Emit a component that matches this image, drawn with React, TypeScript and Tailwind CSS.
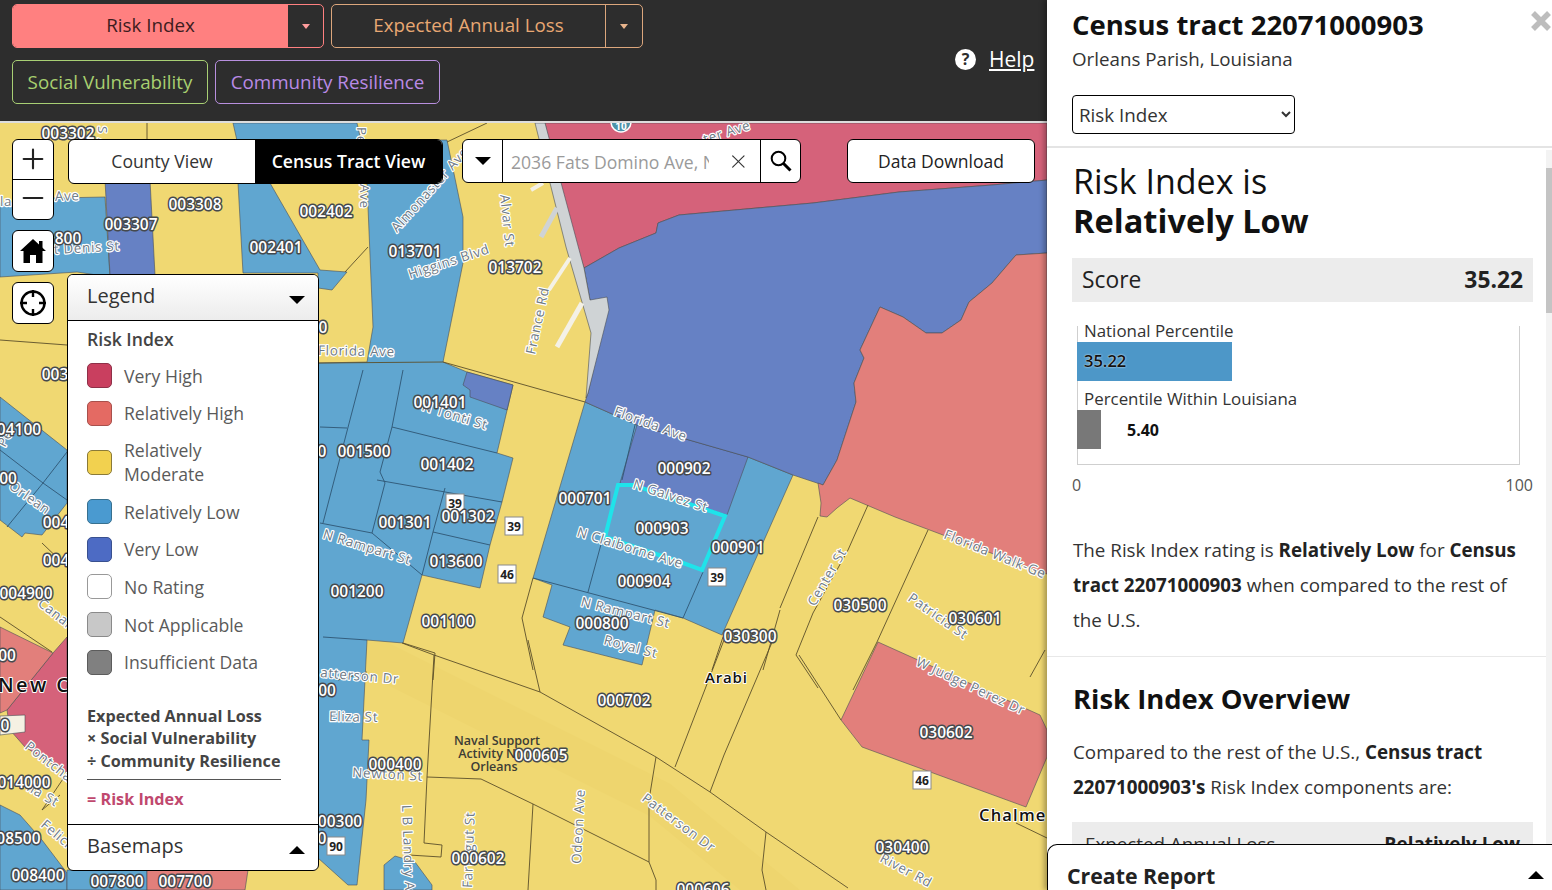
import React from 'react';
import { Plus, Minus, X } from 'lucide-react';

const YELLOW = '#f0d872';
const BLUE = '#60a6d0';
const DARK = '#6681c4';
const RED = '#d5627a';
const SALMON = '#e27f7b';

const polys: [string, string][] = [
  ['0,203 55,198 105,197 110,277 77,272 0,277', BLUE],
  ['105,180 150,180 155,275 110,275', DARK],
  ['233,123 357,123 362,145 238,145', BLUE],
  ['238,183 270,183 320,270 347,272 332,290 318,288 318,273 243,273', BLUE],
  ['365,140 447,140 463,217 463,263 443,362 467,372 513,385 497,453 513,458 502,502 490,545 480,588 422,575 403,643 367,640 362,740 369,740 366,800 357,885 348,885 318,858 318,363 367,362 373,327 367,183', BLUE],
  ['463,385 467,372 513,385 507,410 470,397 470,390', DARK],
  ['585,402 637,425 748,457 793,475 722,635 683,618 655,610 642,665 563,645 570,627 543,617 552,585 533,578', BLUE],
  ['637,425 748,457 727,515 620,483', DARK],
  ['0,397 67,450 67,503 42,535 25,533 22,537 0,520', BLUE],
  ['0,805 20,815 42,840 67,873 67,890 0,890', BLUE],
  ['67,870 147,870 147,890 67,890', BLUE],
  ['147,870 248,870 245,890 147,890', SALMON],
  ['384,890 384,865 395,856 415,862 432,885 432,890', BLUE],
  ['67,637 53,653 7,710 10,730 25,747 67,773', RED],
  ['0,627 53,653 7,710 0,713', SALMON],
  ['0,716 25,715 25,732 0,735', '#f5f1e3'],
  ['545,123 1047,123 1047,180 992,185 899,192 813,203 679,215 658,223 656,233 619,248 584,268 557,183', RED],
  ['584,268 619,248 656,233 658,223 679,215 813,203 899,192 992,185 1047,180 1047,253 1016,255 992,283 969,302 961,320 942,333 926,333 903,317 880,307 860,350 864,358 854,383 856,402 837,460 823,485 793,475 748,457 637,425 585,402 588,393 607,310 590,300', DARK],
  ['880,307 903,317 926,333 942,333 961,320 969,302 992,283 1016,255 1047,253 1047,574 943,535 895,517 850,498 837,508 827,517 820,516 821,503 818,483 823,485 837,460 856,402 854,383 864,358 860,350', SALMON],
  ['878,642 1040,715 1047,730 1047,757 1026,807 862,747 841,720', SALMON],
  ['535,123 545,123 584,268 590,300 607,297 609,310 588,393 586,398 591,333 566,247', '#cfd3d5'],
];

const tractLines = [
  '402,643 434,655 540,692 656,757 710,792 766,832 848,888',
  '434,655 427,777 424,843 442,845 441,857 409,855',
  '427,777 481,779 533,804 649,862 656,880 656,890',
  '533,804 528,890',
  '656,757 649,800 649,862',
  '528,640 540,692',
  '724,640 675,767',
  '773,640 724,755 710,792',
  '799,655 841,720',
  '766,832 762,870 766,890',
  '1016,823 1047,838',
  '818,517 780,608',
  '868,505 848,550 813,613 796,655 818,688',
  '928,530 877,642 853,690',
  '1045,650 1030,677',
  '522,618 533,578',
  '522,618 533,670',
  '403,643 435,653 433,680',
  '780,610 763,670',
  '723,637 712,670',
  '147,123 147,139',
  '447,142 487,123',
  '368,247 345,272',
  '0,340 67,345',
  '42,543 67,567',
  '0,617 52,652',
  '338,680 367,672',
  '67,773 42,810 60,795',
  '443,362 585,402',
  '318,363 443,362',
];

const blueLines = [
  '635,425 622,480',
  '603,537 588,592',
  '533,578 683,618',
  '703,572 683,618',
  '363,370 323,523',
  '403,370 392,427 380,472 385,483 372,533',
  '392,427 497,453',
  '377,480 502,502',
  '445,488 433,532 422,575',
  '433,532 490,545',
  '320,523 372,533 422,575',
  '320,427 347,428',
  '323,637 367,640',
  '0,450 43,483 67,500',
  '67,452 43,483 7,527',
];

type Lbl = [string, number, number];
const tractLabels: Lbl[] = [
  ['003302', 68, 133], ['003308', 195, 204], ['003307', 131, 224], ['002402', 326, 211], ['002401', 276, 247],
  ['013701', 415, 251], ['013702', 515, 267], ['800', 68, 238], ['001401', 440, 402], ['001500', 364, 451],
  ['001402', 447, 464], ['001301', 405, 522], ['001302', 468, 516], ['013600', 456, 561], ['001200', 357, 591],
  ['001100', 448, 621], ['000701', 585, 498], ['000902', 684, 468], ['000903', 662, 528], ['000901', 738, 547],
  ['000904', 644, 581], ['000800', 602, 623], ['030300', 750, 636], ['000702', 624, 700], ['030500', 860, 605],
  ['030601', 975, 618], ['030602', 946, 732], ['030400', 902, 847], ['000605', 541, 755], ['000400', 395, 764],
  ['000602', 478, 858], ['000606', 703, 889], ['00300', 340, 821], ['00', 327, 690], ['0', 322, 451], ['0', 323, 327],
  ['04100', 19, 429], ['00', 8, 478], ['004', 56, 522], ['004', 56, 560], ['004900', 26, 593], ['00', 7, 655],
  ['014000', 24, 782], ['008500', 14, 838], ['008400', 38, 875], ['007800', 117, 881], ['007700', 185, 881], ['003', 55, 374],
  ['0', 322, 838], ['0', 5, 725],
];

type Street = [string, number, number, number];
const streets: Street[] = [
  ['Ave', 55, 201, -2], ['la', 0, 206, 0], ['t Denis St', 54, 254, -3], ['Almonaster Ave', 397, 233, -48],
  ['Higgins Blvd', 410, 279, -18], ['Alvar St', 500, 195, 84], ['France Rd', 535, 355, -78], ['Florida Ave', 318, 355, 1],
  ['N Tonti St', 421, 410, 17], ['Florida Ave', 613, 415, 20], ['N Claiborne Ave', 576, 536, 17],
  ['N Galvez St', 632, 488, 18], ['N Rampart St', 322, 538, 17], ['N Rampart St', 580, 606, 14], ['Royal St', 603, 644, 15],
  ['Center St', 815, 607, -60], ['Patricia St', 907, 600, 35], ['Florida Walk-Ge', 943, 538, 22], ['W Judge Perez Dr', 915, 665, 25],
  ['ter Ave', 705, 144, -18], ['atterson Dr', 320, 677, 5], ['Eliza St', 329, 721, 1], ['Newton St', 352, 777, 3],
  ['L B Landry Ave', 402, 805, 88], ['Farragut St', 472, 888, -88], ['Odeon Ave', 581, 864, -87],
  ['Patterson Dr', 641, 800, 37], ['River Rd', 879, 861, 28], ['S A', 98, 126, 90], ['Pe', 357, 127, 90], ['Ave', 360, 184, 90],
  ['Orlean', 8, 488, 35], ['Canal', 37, 605, 38], ['Pontcha', 24, 748, 38], ['Felicia', 40, 826, 40], ['lla St', 26, 790, 30], ['Pe', 5, 448, -62],
];

const shields: [string, number, number][] = [
  ['39', 455, 503], ['39', 514, 526], ['46', 507, 574], ['39', 717, 577], ['46', 922, 780], ['90', 336, 846],
];

const MapLayer = () => (
  <svg viewBox="0 123 1047 767" className="block w-[1047px] h-[767px] font-['Open_Sans',sans-serif]">
    <rect x="0" y="123" width="1047" height="767" fill={YELLOW} />
    <polyline points="340,640 660,800 880,980" fill="none" stroke="#eed56e" strokeWidth="38" />
    <polygon points="640,285 830,245 960,240 900,290 850,330 790,420 700,400 620,380" fill="#6d88c9" opacity="0.6" />
    {polys.map(([points, fill], i) => (
      <polygon key={i} points={points} fill={fill} stroke="#4a4f55" strokeWidth="0.6" />
    ))}
    <polyline points="557,347 582,303" stroke="#f4f1e6" strokeWidth="5" fill="none" />
    <polyline points="549,290 570,258" stroke="#f4f1e6" strokeWidth="4" fill="none" />
    <polyline points="541,237 557,208" stroke="#cfd3d5" strokeWidth="5" fill="none" />
    <polyline points="531,190 543,183" stroke="#f4f1e6" strokeWidth="4" fill="none" />
    {tractLines.map((points, i) => (
      <polyline key={i} points={points} fill="none" stroke="#5b4f2a" strokeWidth="0.9" />
    ))}
    {blueLines.map((points, i) => (
      <polyline key={i} points={points} fill="none" stroke="#2f5674" strokeWidth="0.9" />
    ))}
    <polygon points="618,485 633,485 725,516 702,570 683,563 605,537" fill="none" stroke="#1fe3ea" strokeWidth="4" />
    <circle cx="621" cy="122" r="10" fill="#4d93a8" stroke="#fff" strokeWidth="1.5" />
    <text x="621" y="130" textAnchor="middle" fontSize="10" fontWeight="700" fill="#fff">10</text>
    {streets.map(([t, x, y, r], i) => (
      <text key={i} x={x} y={y} transform={`rotate(${r} ${x} ${y})`} fontSize="13.4" fontWeight="500" letterSpacing="0.7" fill="#6e7a86" stroke="#fff" strokeWidth="2.4" strokeLinejoin="round" className="[paint-order:stroke]">
        {t}
      </text>
    ))}
    {shields.map(([t, x, y], i) => (
      <g key={i}>
        <rect x={x - 9} y={y - 9} width="18" height="18" fill="#fff" stroke="#8a8a8a" strokeWidth="1" />
        <text x={x} y={y + 4.5} textAnchor="middle" fontSize="12" fontWeight="700" fill="#222">{t}</text>
      </g>
    ))}
    {tractLabels.map(([t, x, y], i) => (
      <text key={i} x={x} y={y + 5.5} textAnchor="middle" fontSize="15.5" fontWeight="600" fill="#fff" stroke="#45494d" strokeWidth="3" strokeLinejoin="round" className="[paint-order:stroke]">
        {t}
      </text>
    ))}
    <g fontSize="12.5" fontWeight="600" fill="#3d3d35" textAnchor="middle">
      <text x="497" y="745">Naval Support</text>
      <text x="487" y="758">Activity N</text>
      <text x="494" y="771">Orleans</text>
    </g>
    <g fontWeight="600" fill="#111" stroke="#fff" strokeWidth="2" strokeLinejoin="round" className="[paint-order:stroke]">
      <text x="705" y="683" fontSize="15" letterSpacing="0.8">Arabi</text>
      <text x="979" y="821" fontSize="16.5" letterSpacing="1.2">Chalme</text>
      <text x="-2" y="692" fontSize="20" letterSpacing="2.4">New C</text>
    </g>
  </svg>
);

const legendRows: [string, string, string][] = [
  ['Very High', 'bg-[#c93f5f]', 'border-[#8e3048]'],
  ['Relatively High', 'bg-[#e46a63]', 'border-[#a8504c]'],
  ['Relatively Moderate', 'bg-[#f2d14f]', 'border-[#8a7a38]'],
  ['Relatively Low', 'bg-[#4a9ad0]', 'border-[#37708f]'],
  ['Very Low', 'bg-[#4d6bc4]', 'border-[#39508f]'],
  ['No Rating', 'bg-white', 'border-[#999999]'],
  ['Not Applicable', 'bg-[#c8c8c8]', 'border-[#8a8a8a]'],
  ['Insufficient Data', 'bg-[#808080]', 'border-[#5c5c5c]'],
];

const Down = ({ className }: { className: string }) => (
  <div className={`w-0 h-0 border-x-[8px] border-x-transparent border-t-[8px] border-t-black ${className}`} />
);
const Up = ({ className }: { className: string }) => (
  <div className={`w-0 h-0 border-x-[8px] border-x-transparent border-b-[8px] border-b-black ${className}`} />
);

const Legend = () => (
  <div className="absolute left-[67px] top-[151px] w-[252px] h-[597px] bg-white border border-black rounded-[6px] overflow-hidden flex flex-col">
    <div className="h-[46px] shrink-0 flex items-center justify-between pl-[19px] pr-[13px] border-b border-black bg-gradient-to-b from-white to-[#ececec]">
      <span className="text-[20px] leading-[24px] text-[#333] -mt-[4px]">Legend</span>
      <Down className="mt-1" />
    </div>
    <div className="flex-1 pl-[19px] pr-[37px] pt-[6px]">
      <div className="text-[17.6px] leading-[24px] font-semibold text-[#444] mb-[12px]">Risk Index</div>
      <div className="flex flex-col gap-[12.7px]">
        {legendRows.map(([label, bg, border]) => (
          <div key={label} className="flex items-center gap-[12px]">
            <div className={`w-[25px] h-[25px] rounded-[5px] border shrink-0 ${bg} ${border}`} />
            <span className="text-[17.6px] leading-[24px] text-[#5a5a5a] w-[150px]">{label}</span>
          </div>
        ))}
      </div>
      <div className="mt-[30px] text-[16.2px] leading-[22.5px] font-bold text-[#444]">
        <div>Expected Annual Loss</div>
        <div>× Social Vulnerability</div>
        <div>÷ Community Resilience</div>
      </div>
      <div className="mt-[7px] border-t border-[#555] w-[194px]" />
      <div className="mt-[8px] text-[16.2px] leading-[22px] font-bold text-[#c0486e]">= Risk Index</div>
    </div>
    <div className="h-[46px] shrink-0 flex items-center justify-between pl-[19px] pr-[13px] border-t border-black">
      <span className="text-[20px] leading-[24px] text-[#333] -mt-[4px]">Basemaps</span>
      <Up className="mt-1" />
    </div>
  </div>
);

const MapControls = () => (
  <>
    <div className="absolute left-[12px] top-[16px] flex flex-col w-[42px]">
      <div className="bg-white border border-black rounded-[6px] flex flex-col h-[81px]">
        <div className="h-[40px] flex items-center justify-center border-b border-black pb-[2px]"><Plus size={32} strokeWidth={1.6} className="text-[#222]" /></div>
        <div className="flex-1 flex items-center justify-center pb-[3px]"><Minus size={32} strokeWidth={1.6} className="text-[#222]" /></div>
      </div>
      <div className="mt-[10px] h-[42px] bg-white border border-black rounded-[6px] flex items-center justify-center">
        <svg viewBox="0 0 26 26" className="w-[26px] h-[26px]" fill="black">
          <path d="M13 1 L26 13 L22.5 13 L22.5 25 L16 25 L16 17 L10 17 L10 25 L3.5 25 L3.5 13 L0 13 Z" />
          <rect x="19" y="3" width="3.5" height="7" />
        </svg>
      </div>
      <div className="mt-[10px] h-[42px] bg-white border border-black rounded-[6px] flex items-center justify-center">
        <svg viewBox="0 0 28 28" className="w-[28px] h-[28px]" fill="none" stroke="black" strokeWidth="2.4">
          <circle cx="14" cy="14" r="11.5" />
          <path d="M14 1v7M14 20v7M1 14h7M20 14h7" />
        </svg>
      </div>
    </div>

    <div className="absolute left-[68px] top-[16px] w-[375px] h-[45px] flex bg-white border border-black rounded-[6px] overflow-hidden text-[17.6px]">
      <div className="w-[186px] flex items-center justify-center text-[#333]">County View</div>
      <div className="flex-1 flex items-center justify-center bg-black text-white font-semibold">Census Tract View</div>
    </div>

    <div className="absolute left-[462px] top-[16px] w-[339px] h-[44px] flex bg-white border border-black rounded-[6px] overflow-hidden">
      <div className="w-[40px] flex items-center justify-center border-r border-black"><Down className="" /></div>
      <div className="w-[257px] flex items-center pl-[8px] pr-[10px]">
        <span className="w-[201px] overflow-hidden whitespace-nowrap text-[17.6px] leading-[26px] mt-[2px] text-[#9a9a9a]">2036 Fats Domino Ave, New Orleans</span>
        <X size={23} strokeWidth={1.2} className="ml-[18px] text-[#333]" />
      </div>
      <div className="flex-1 flex items-center justify-center border-l border-black">
        <svg viewBox="0 0 22 22" className="w-[22px] h-[22px]" fill="none" stroke="black">
          <circle cx="8.5" cy="8.5" r="6.8" strokeWidth="2" />
          <path d="M13.5 13.5L20.5 20.5" strokeWidth="3" />
        </svg>
      </div>
    </div>

    <div className="absolute left-[847px] top-[16px] w-[188px] h-[44px] bg-white border border-black rounded-[6px] flex items-center justify-center text-[17.5px] text-[#222]">
      Data Download
    </div>
  </>
);

const Header = () => (
  <div className="h-[121px] bg-[#2d2d2d] pl-[12px] pr-[12px] pt-[4px] relative shrink-0">
    <div className="flex gap-[7px]">
      <div className="w-[312px] h-[44px] flex border border-[#ff8080] rounded-[5px] overflow-hidden">
        <div className="w-[275px] bg-[#ff8080] flex items-center justify-center pb-[2px] text-[18.8px] text-[#3d1c1e]">Risk Index</div>
        <div className="flex-1 flex items-center justify-center"><div className="w-0 h-0 border-x-[4px] border-x-transparent border-t-[5px] border-t-[#ff9d9d]" /></div>
      </div>
      <div className="w-[312px] h-[44px] flex border border-[#dca67c] rounded-[5px] overflow-hidden">
        <div className="w-[274px] border-r border-[#dca67c] flex items-center justify-center pb-[2px] text-[18.8px] text-[#e8a873]">Expected Annual Loss</div>
        <div className="flex-1 flex items-center justify-center"><div className="w-0 h-0 border-x-[4px] border-x-transparent border-t-[5px] border-t-[#e8b48c]" /></div>
      </div>
    </div>
    <div className="flex gap-[7px] mt-[12px]">
      <div className="w-[196px] h-[44px] border border-[#a8cf74] rounded-[5px] flex items-center justify-center text-[18.8px] text-[#a8d070]">Social Vulnerability</div>
      <div className="w-[225px] h-[44px] border border-[#b88fdf] rounded-[5px] flex items-center justify-center text-[18.8px] text-[#b98ae6]">Community Resilience</div>
    </div>
    <div className="absolute left-[955px] top-[45px] flex items-center gap-[13px]">
      <div className="w-[21px] h-[21px] rounded-full bg-white text-[#2d2d2d] text-[16px] font-bold flex items-center justify-center">?</div>
      <span className="text-[21px] leading-[28px] text-white underline">Help</span>
    </div>
  </div>
);

const Panel = () => (
  <div className="w-[505px] h-[890px] bg-white relative shrink-0 overflow-hidden shadow-[-3px_0_5px_rgba(0,0,0,0.3)] text-[#333]">
    <div className="h-[148px] border-b-2 border-[#e4e4e4] pl-[25px] pt-[5px] relative">
      <h1 className="text-[27.5px] leading-[40px] font-bold text-[#111]">Census tract 22071000903</h1>
      <p className="text-[18.75px] leading-[28px] text-[#333]">Orleans Parish, Louisiana</p>
      <select defaultValue="Risk Index" className="mt-[22px] block w-[223px] h-[39px] bg-white border border-black rounded-[4px] pl-[2px] text-[18.8px] text-[#333]">
        <option>Risk Index</option>
        <option>Expected Annual Loss</option>
      </select>
      <svg viewBox="0 0 20 20" className="absolute right-[1px] top-[11px] w-[20px] h-[20px]" stroke="#bdbdbd" strokeWidth="5.5">
        <path d="M2 2l16 16M18 2L2 18" />
      </svg>
    </div>
    <div className="pl-[26px] pr-[19px] pt-[14px]">
      <h2 className="text-[34px] leading-[39px] text-[#111]">Risk Index is<br /><b className="font-bold text-[32.6px]">Relatively Low</b></h2>
      <div className="-ml-[1px] mt-[18px] h-[44px] bg-[#ececec] flex items-center justify-between px-[10px] text-[22.8px] leading-[30px] text-[#222]">
        <span>Score</span><b className="font-bold">35.22</b>
      </div>
      <div className="relative mt-[24px] ml-[4px] w-[443px] h-[139px] border-x border-b border-[#cfcfcf]">
        <div className="text-[16.9px] leading-[10px] pl-[6px] text-[#333]">National Percentile</div>
        <div className="mt-[6px] -ml-[1px] h-[39px] w-[155px] bg-[#4d97c8] flex items-center pl-[7px] text-[16.5px] font-semibold text-[#111] [text-shadow:0_0_2px_#fff]">35.22</div>
        <div className="mt-[12px] text-[16.9px] leading-[12px] pl-[6px] text-[#333]">Percentile Within Louisiana</div>
        <div className="mt-[5px] -ml-[1px] flex items-center">
          <div className="h-[39px] w-[24px] bg-[#787878]" />
          <b className="ml-[26px] text-[16px] font-bold text-[#111]">5.40</b>
        </div>
      </div>
      <div className="flex justify-between w-[461px] -ml-[1px] mt-[9px] text-[16px] leading-[22px] text-[#555]">
        <span>0</span><span>100</span>
      </div>
      <p className="mt-[37px] text-[18.8px] leading-[35px] w-[450px]">
        The Risk Index rating is <b className="font-bold text-[#222]">Relatively Low</b> for <b className="font-bold text-[#222]">Census tract 22071000903</b> when compared to the rest of the U.S.
      </p>
    </div>
    <div className="mt-[18px] mr-[6px] border-t border-[#e8e8e8]" />
    <div className="pl-[26px] pr-[19px] pt-[21px]">
      <h2 className="text-[27.4px] leading-[42px] font-bold text-[#111]">Risk Index Overview</h2>
      <p className="mt-[15px] text-[18.8px] leading-[35px] w-[440px]">
        Compared to the rest of the U.S., <b className="font-bold text-[#222]">Census tract 22071000903's</b> Risk Index components are:
      </p>
      <div className="-ml-[1px] mt-[17px] h-[44px] bg-[#ececec] flex items-center justify-between px-[13px] text-[18.8px]">
        <span>Expected Annual Loss</span><b className="font-bold text-[#222]">Relatively Low</b>
      </div>
    </div>
    <div className="absolute right-0 top-[150px] bottom-0 w-[6px] bg-[#f3f3f3]">
      <div className="mt-[18px] h-[145px] bg-[#c4c4c4]" />
    </div>
    <div className="absolute left-0 right-0 bottom-0 h-[46px] bg-white border-t border-l border-black rounded-tl-[10px] flex items-center justify-between pl-[19px] pr-[8px] pt-[16px]">
      <span className="text-[21.3px] leading-[28px] font-bold text-[#222]">Create Report</span>
      <Up className="-mt-[2px]" />
    </div>
  </div>
);

export default function App() {
  return (
    <div className="w-[1552px] h-[890px] flex overflow-hidden font-['Open_Sans',sans-serif]">
      <div className="w-[1047px] h-[890px] flex flex-col">
        <Header />
        <div className="h-[2px] bg-[#dddddd] shrink-0" />
        <div className="relative h-[767px] overflow-hidden">
          <MapLayer />
          <MapControls />
          <Legend />
        </div>
      </div>
      <Panel />
    </div>
  );
}
